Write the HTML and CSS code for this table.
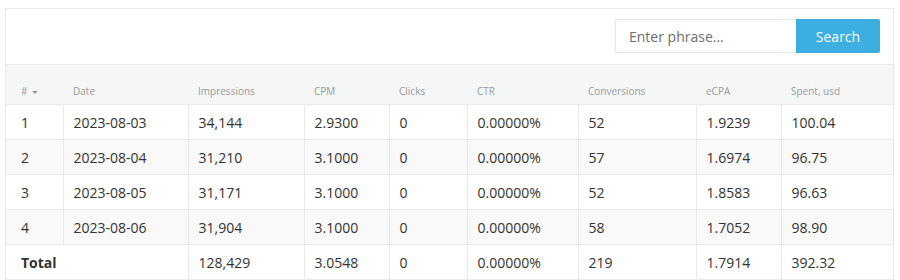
FILE: index.html
```html
<!DOCTYPE html>
<html lang="en">
<head>
    <meta charset="UTF-8">
    <title>Campaign Stats</title>
    <link rel="stylesheet" href="styles.css">
</head>
<body>
    <div class="ibox">
        <div class="ibox-header">
            <form class="search-form">
                <input type="text" class="search-input" placeholder="Enter phrase...">
                <button type="submit" class="search-btn">Search</button>
            </form>
        </div>
        <table class="stats-table">
            <colgroup>
                <col class="c-num"><col class="c-date"><col class="c-imp"><col class="c-cpm"><col class="c-clicks">
                <col class="c-ctr"><col class="c-conv"><col class="c-ecpa"><col class="c-spent">
            </colgroup>
            <thead>
                <tr>
                    <th># <span class="caret"></span></th>
                    <th>Date</th>
                    <th>Impressions</th>
                    <th>CPM</th>
                    <th>Clicks</th>
                    <th>CTR</th>
                    <th>Conversions</th>
                    <th>eCPA</th>
                    <th>Spent, usd</th>
                </tr>
            </thead>
            <tbody>
                <tr><td>1</td><td>2023-08-03</td><td>34,144</td><td>2.9300</td><td>0</td><td>0.00000%</td><td>52</td><td>1.9239</td><td>100.04</td></tr>
                <tr><td>2</td><td>2023-08-04</td><td>31,210</td><td>3.1000</td><td>0</td><td>0.00000%</td><td>57</td><td>1.6974</td><td>96.75</td></tr>
                <tr><td>3</td><td>2023-08-05</td><td>31,171</td><td>3.1000</td><td>0</td><td>0.00000%</td><td>52</td><td>1.8583</td><td>96.63</td></tr>
                <tr><td>4</td><td>2023-08-06</td><td>31,904</td><td>3.1000</td><td>0</td><td>0.00000%</td><td>58</td><td>1.7052</td><td>98.90</td></tr>
            </tbody>
            <tfoot>
                <tr><td colspan="2" class="total-label">Total</td><td>128,429</td><td>3.0548</td><td>0</td><td>0.00000%</td><td>219</td><td>1.7914</td><td>392.32</td></tr>
            </tfoot>
        </table>
    </div>
</body>
</html>
```

FILE: styles.css
```css
body { font-family: "Open Sans", "Liberation Sans", sans-serif; margin: 8px 6px 0 5px; background-color: #fff; color: #333; font-size: 14px; }
.ibox { border: 1px solid #e7eaec; background-color: #fff; }
.ibox-header { display: flex; justify-content: flex-end; padding: 10px 13px 11px 14px; }
.search-form { display: flex; margin: 0; }
.search-input { width: 181px; height: 34px; box-sizing: border-box; padding: 0 13px; border: 1px solid #e5e6e7; border-right: none; border-radius: 2px 0 0 2px; font-family: inherit; font-size: 14px; color: #333; outline: none; }
.search-input::placeholder { color: #6f6f6f; }
.search-btn { width: 84px; height: 34px; border: none; border-radius: 0 2px 2px 0; background-color: #3caee0; color: #fff; font-family: inherit; font-size: 14px; cursor: pointer; }
.stats-table { width: 100%; border-collapse: collapse; table-layout: fixed; }
.c-num { width: 57px; }
.c-date { width: 125px; }
.c-imp { width: 116px; }
.c-cpm { width: 85px; }
.c-clicks { width: 78px; }
.c-ctr { width: 111px; }
.c-conv { width: 118px; }
.c-ecpa { width: 85px; }
.c-spent { width: 112px; }
.stats-table th { background-color: #f5f7f7; border-top: 1px solid #e7eaec; color: #999; font-size: 10px; font-weight: normal; text-align: left; height: 40px; padding: 0 10px 6px; vertical-align: bottom; box-sizing: border-box; }
.stats-table td { border-top: 1px solid #e7eaec; border-left: 1px solid #e7eaec; height: 34px; padding: 0 10px; text-align: left; vertical-align: middle; white-space: nowrap; }
.stats-table th:first-child, .stats-table td:first-child { padding-left: 15px; border-left: none; }
.stats-table tbody tr:nth-child(even) td { background-color: #f9f9f9; }
.stats-table tfoot td { background-color: #fff; }
.total-label { font-weight: bold; }
.caret { display: inline-block; width: 0; height: 0; margin-left: 2px; vertical-align: middle; border-left: 3px solid transparent; border-right: 3px solid transparent; border-top: 3px solid #999; }
```
